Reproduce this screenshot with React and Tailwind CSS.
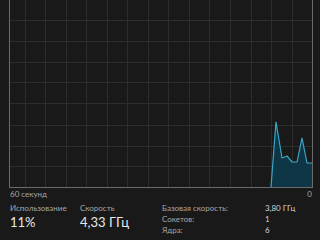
const vLines = [25, 45, 66, 86, 107, 127, 148, 168, 189, 209, 230, 251, 271, 292];
const hLines = [20, 41, 62, 82, 103, 125, 146, 166];

// cpu samples, absolute page coords
const pts = [
  [271, 187], [276, 122], [282, 158], [287, 156], [292, 162],
  [297, 162], [302, 138], [307, 163], [312, 163],
];

const CpuGraph = () => {
  const line = pts.map(([x, y]) => `${x - 10},${y}`).join(' ');
  const area = `${line} 302,187 261,187`;
  return (
    <div className="ml-[9px] w-[304px] h-[188px] border-x border-b border-[#6b6b6b]">
      <svg width="302" height="187" className="block">
        {vLines.map((x) => (
          <line key={x} x1={x - 10 + 0.5} y1="0" x2={x - 10 + 0.5} y2="187" stroke="#2d2d2d" strokeWidth="1" />
        ))}
        {hLines.map((y) => (
          <line key={y} x1="0" y1={y + 0.5} x2="302" y2={y + 0.5} stroke="#2d2d2d" strokeWidth="1" />
        ))}
        <polygon points={area} fill="#0f3646" />
        <polyline points={line} fill="none" stroke="#3aa6c6" strokeWidth="1.2" strokeLinejoin="round" />
      </svg>
    </div>
  );
};

const Detail = ({ label, value }) => (
  <div className="flex h-[11px] items-center">
    <span className="w-[103px] text-[#a6a6a6]">{label}</span>
    <span className="text-[#d6d6d6]">{value}</span>
  </div>
);

export default function App() {
  return (
    <div className="w-[320px] h-[240px] overflow-hidden bg-[#191919] font-['Lato',sans-serif] text-[8px]">
      <CpuGraph />
      <div className="flex justify-between pl-[10px] pr-[8px] pt-[1px] text-[#a6a6a6] leading-[10px]">
        <span>60 секунд</span>
        <span>0</span>
      </div>
      <div className="flex pt-[4px]">
        <div className="w-[80px] pl-[10px]">
          <div className="text-[#a6a6a6] leading-[10px]">Использование</div>
          <div className="text-[13px] leading-[19px] text-[#e8e8e8]">11%</div>
        </div>
        <div className="w-[82px]">
          <div className="text-[#a6a6a6] leading-[10px]">Скорость</div>
          <div className="text-[13px] leading-[19px] text-[#e8e8e8]">4,33 ГГц</div>
        </div>
        <div className="-mt-[1px]">
          <Detail label="Базовая скорость:" value="3,80 ГГц" />
          <Detail label="Сокетов:" value="1" />
          <Detail label="Ядра:" value="6" />
        </div>
      </div>
    </div>
  );
}
